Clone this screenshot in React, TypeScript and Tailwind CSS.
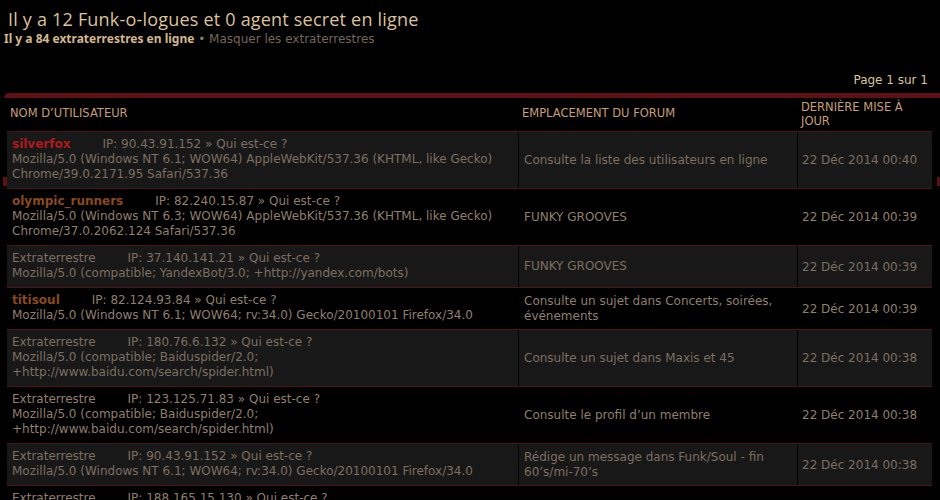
type Row = {
  name: string;
  kind: "admin" | "member" | "guest";
  ip: string;
  agent: string[];
  where: string[];
  when: string;
};

const rows: Row[] = [
  {
    name: "silverfox",
    kind: "admin",
    ip: "90.43.91.152",
    agent: ["Mozilla/5.0 (Windows NT 6.1; WOW64) AppleWebKit/537.36 (KHTML, like Gecko)", "Chrome/39.0.2171.95 Safari/537.36"],
    where: ["Consulte la liste des utilisateurs en ligne"],
    when: "22 Déc 2014 00:40",
  },
  {
    name: "olympic_runners",
    kind: "member",
    ip: "82.240.15.87",
    agent: ["Mozilla/5.0 (Windows NT 6.3; WOW64) AppleWebKit/537.36 (KHTML, like Gecko)", "Chrome/37.0.2062.124 Safari/537.36"],
    where: ["FUNKY GROOVES"],
    when: "22 Déc 2014 00:39",
  },
  {
    name: "Extraterrestre",
    kind: "guest",
    ip: "37.140.141.21",
    agent: ["Mozilla/5.0 (compatible; YandexBot/3.0; +http://yandex.com/bots)"],
    where: ["FUNKY GROOVES"],
    when: "22 Déc 2014 00:39",
  },
  {
    name: "titisoul",
    kind: "member",
    ip: "82.124.93.84",
    agent: ["Mozilla/5.0 (Windows NT 6.1; WOW64; rv:34.0) Gecko/20100101 Firefox/34.0"],
    where: ["Consulte un sujet dans Concerts, soirées,", "événements"],
    when: "22 Déc 2014 00:39",
  },
  {
    name: "Extraterrestre",
    kind: "guest",
    ip: "180.76.6.132",
    agent: ["Mozilla/5.0 (compatible; Baiduspider/2.0;", "+http://www.baidu.com/search/spider.html)"],
    where: ["Consulte un sujet dans Maxis et 45"],
    when: "22 Déc 2014 00:38",
  },
  {
    name: "Extraterrestre",
    kind: "guest",
    ip: "123.125.71.83",
    agent: ["Mozilla/5.0 (compatible; Baiduspider/2.0;", "+http://www.baidu.com/search/spider.html)"],
    where: ["Consulte le profil d’un membre"],
    when: "22 Déc 2014 00:38",
  },
  {
    name: "Extraterrestre",
    kind: "guest",
    ip: "90.43.91.152",
    agent: ["Mozilla/5.0 (Windows NT 6.1; WOW64; rv:34.0) Gecko/20100101 Firefox/34.0"],
    where: ["Rédige un message dans Funk/Soul - fin", "60’s/mi-70’s"],
    when: "22 Déc 2014 00:38",
  },
  {
    name: "Extraterrestre",
    kind: "guest",
    ip: "188.165.15.130",
    agent: ["Mozilla/5.0 (compatible; Googlebot/2.1; +http://www.google.com/bot.html)"],
    where: ["Consulte l’index du forum"],
    when: "22 Déc 2014 00:38",
  },
];

function UserName({ row }: { row: Row }) {
  if (row.kind === "admin") {
    return <span className="font-bold text-[#b01a1a]">{row.name}</span>;
  }
  if (row.kind === "member") {
    return <span className="font-bold text-[#8a4a1e]">{row.name}</span>;
  }
  return <span>{row.name}</span>;
}

export default function App() {
  return (
    <div className="w-[940px] h-[500px] overflow-hidden bg-black font-['DejaVu_Sans',sans-serif] text-[12px]">

      {/* HEADER */}
      <h1 className="pl-2 pt-[7px] text-[18px] leading-[24px] font-medium tracking-[0.2px] text-[#dcc29a] font-['Open_Sans',sans-serif]">
        Il y a 12 Funk-o-logues et 0 agent secret en ligne
      </h1>
      <p className="pl-1 leading-[16px]">
        <span className="font-bold text-[#d4b78e] font-['Noto_Sans',sans-serif]">Il y a 84 extraterrestres en ligne</span>
        <span className="text-[#8a7a66]"> • </span>
        <span className="text-[#74665a]">Masquer les extraterrestres</span>
      </p>

      <div className="flex justify-end pr-3 pt-[25px] leading-[16px] text-[#dcc29a]">
        Page 1 sur 1
      </div>

      {/* TABLE */}
      <div className="relative mt-[5px]">
        <div className="ml-1 h-[5px] bg-[#5e1015] rounded-tl-[5px]" />

        <div className="ml-[7px] w-[925px]">
          <div className="grid grid-cols-[511px_279px_135px] h-[33px] pb-[2px] items-center text-[11.5px] text-[#c89e76] uppercase">
            <div className="pl-[3px]">Nom d’utilisateur</div>
            <div className="pl-1">Emplacement du forum</div>
            <div className="pl-1 pr-3 leading-[14px]">Dernière mise à jour</div>
          </div>

          {rows.map((row, i) => {
            const alt = i % 2 === 0;
            const tone = alt ? "text-[#7d6f60]" : "text-[#8f7f6c]";
            return (
              <div
                key={i}
                className={`grid grid-cols-[511px_279px_135px] border-t border-[#4d1518] ${alt ? "bg-[#181818]" : "bg-black"} ${tone}`}
              >
                <div className="pl-[5px] pt-[5px] pb-[6px] leading-[15px]">
                  <div>
                    <UserName row={row} />
                    <span className="ml-8">IP: {row.ip} » Qui est-ce ?</span>
                  </div>
                  {row.agent.map((a, j) => (
                    <div key={j}>{a}</div>
                  ))}
                </div>
                <div className="flex flex-col justify-center pl-[5px] leading-[15px] border-l border-black">
                  {row.where.map((w, j) => (
                    <div key={j}>{w}</div>
                  ))}
                </div>
                <div className="flex items-center pl-[4px] border-l border-black">
                  {row.when}
                </div>
              </div>
            );
          })}
        </div>

        {/* corner marks */}
        <div className="absolute left-[3px] top-[84px] w-[4px] h-[9px] bg-[#5e1015]" />
        <div className="absolute right-0 top-[84px] w-[3px] h-[9px] bg-[#5e1015]" />
      </div>
    </div>
  );
}
